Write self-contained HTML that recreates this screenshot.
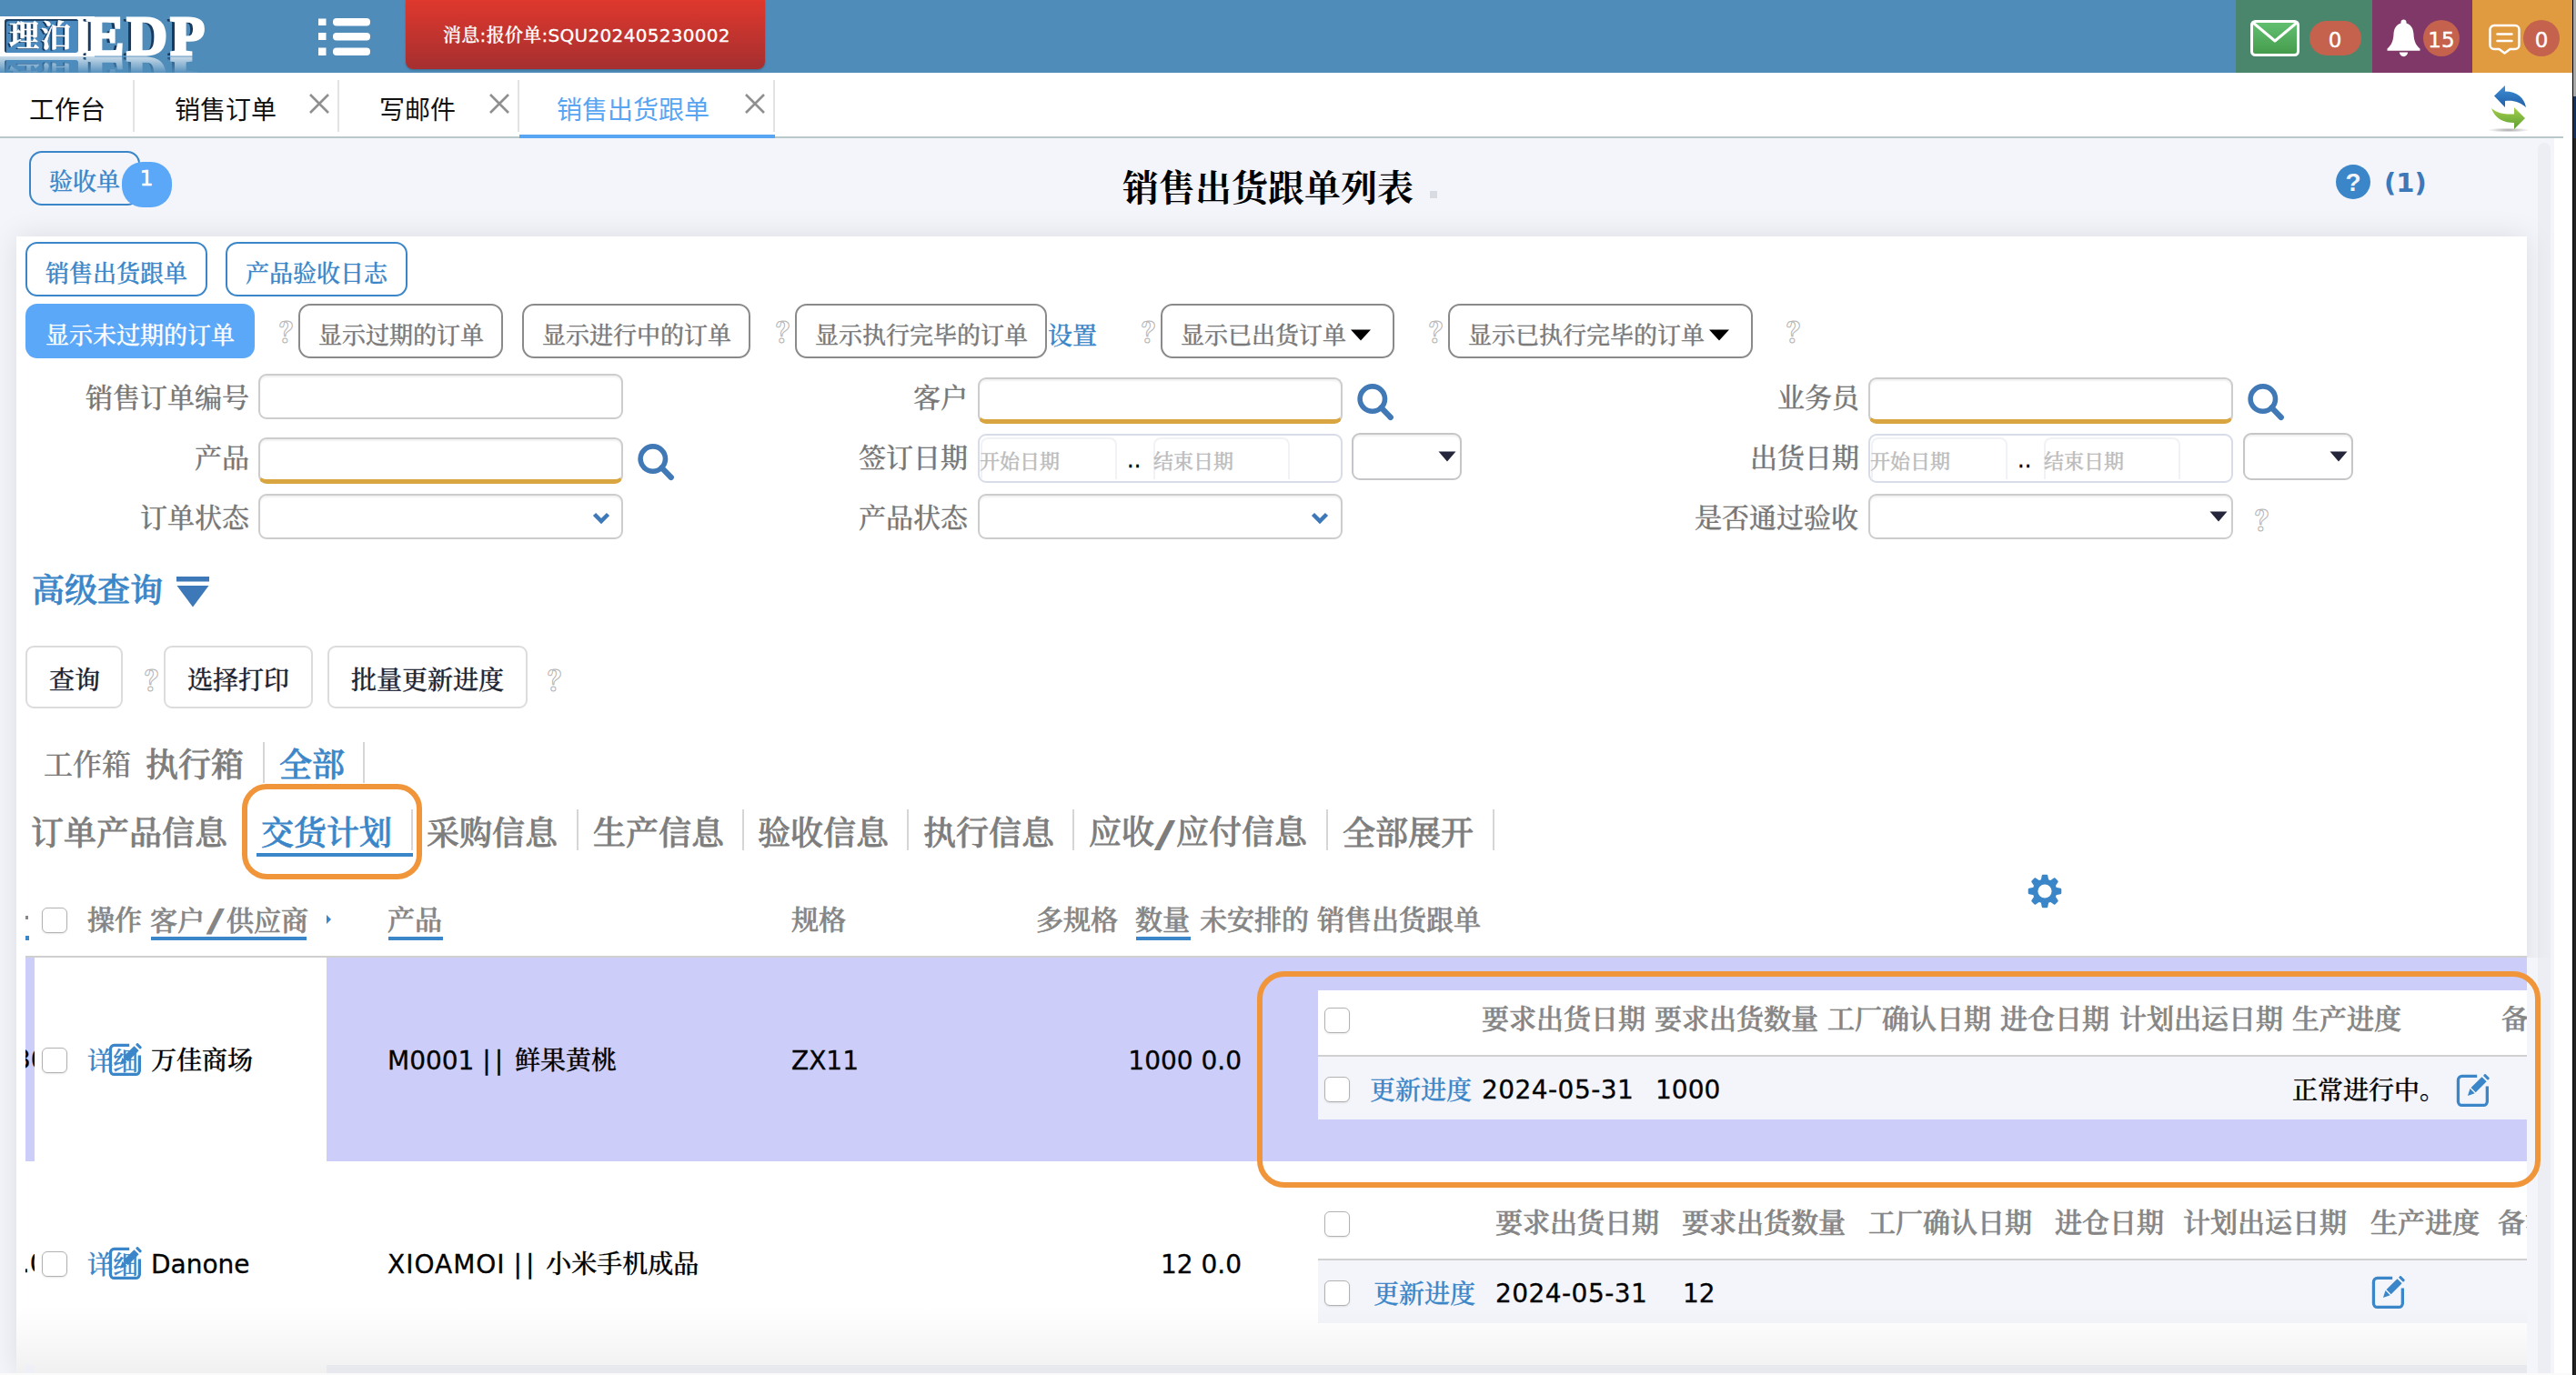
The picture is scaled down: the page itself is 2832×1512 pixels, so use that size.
<!DOCTYPE html>
<html lang="zh-CN">
<head>
<meta charset="utf-8">
<title>销售出货跟单列表</title>
<style>
*{box-sizing:border-box;margin:0;padding:0}
html,body{width:2832px;height:1512px;overflow:hidden;background:#fff}
body{position:relative;font-family:"Liberation Serif","Noto Serif CJK SC",serif;color:#000;font-weight:500;-webkit-text-stroke:.3px currentColor}
.a{position:absolute}
.t{position:absolute;white-space:nowrap;line-height:1;transform:translateY(-50%)}
.sans{font-family:"Liberation Sans","Noto Sans CJK SC",sans-serif;font-weight:400;-webkit-text-stroke:0}
.vd{font-family:"DejaVu Sans","Noto Serif CJK SC",sans-serif}
.serif{font-family:"Liberation Serif","Noto Serif CJK SC",serif}
.b{font-weight:bold;-webkit-text-stroke:0}
.fb{font-weight:500;-webkit-text-stroke:.8px currentColor}
.blue{color:#3a86c8}
.grey{color:#7a7a7a}
.q{position:absolute;white-space:nowrap;line-height:1;transform:translateY(-50%);color:rgba(255,255,255,.6);-webkit-text-stroke:1px #b4b4b4;font-size:30px;font-family:"Noto Serif CJK SC","Liberation Serif",serif;font-weight:900}
/* header */
#hdr{left:0;top:0;width:2828px;height:80px;background:#4f8cba}
#msg{left:446px;top:0;width:395px;height:76px;border-radius:0 0 8px 8px;background:linear-gradient(#df382d,#a52f30);box-shadow:0 1px 2px rgba(0,0,0,.25)}
/* tabs */
#tabs{left:0;top:80px;width:2828px;height:71px;background:#fff}
.tsep{position:absolute;top:88px;width:2px;height:57px;background:#e3e3e3}
.tx{position:absolute;width:24px;height:24px}
.tab{font-size:28px;color:#111}
/* content */
#content{left:0;top:152px;width:2808px;height:1360px;background:#f4f5fa}
#card{left:18px;top:260px;width:2760px;height:1252px;background:#fff;box-shadow:0 0 30px rgba(0,0,20,.10)}
.btn{position:absolute;border:2px solid #3a86c8;border-radius:13px;background:#fff}
.gbtn{position:absolute;border:2px solid #8a8a8a;border-radius:13px;background:#fff}
.wbtn{position:absolute;border:2px solid #dcdcdc;border-radius:9px;background:#fff}
.inp{position:absolute;border:2px solid #cdcdcd;border-radius:9px;background:#fff;box-shadow:inset 0 2px 2px rgba(0,0,0,.06)}
.gold{border-bottom:5px solid #d9a540}
.dr{position:absolute;border:2px solid #d8dce8;border-radius:9px;background:#fff}
.lbl{font-size:30px;color:#777}
.ph{font-size:22px;color:#bcbcbc}
.cb{position:absolute;width:28px;height:28px;border:1.5px solid #b2b2b2;border-radius:6px;background:#fff;box-shadow:0 1px 2px rgba(0,0,0,.1)}
.th{font-size:30px;font-weight:500;-webkit-text-stroke:.7px currentColor;color:#858585}
.td{font-size:28px;color:#000}
.ul{position:absolute;height:4px;background:#3a86c8}
.sl{display:inline-block;width:24px;text-align:center;font-family:"DejaVu Sans",sans-serif;font-style:oblique;font-weight:bold;font-size:32px;line-height:1;-webkit-text-stroke:2px currentColor}
.vs{position:absolute;width:2px;background:#d6d6d6}
</style>
</head>
<body>
<!-- HEADER -->
<div class="a" id="hdr"></div>
<!-- logo -->
<div class="a" style="left:0;top:0;width:244px;height:80px;overflow:hidden">
<div class="a" style="left:0;top:18px;width:240px;height:44px;-webkit-box-reflect:below 0px">
 <div class="a" style="left:0;top:0;width:104px;height:44px;background:#fff"></div>
 <div class="a" style="left:5px;top:3px;width:81px;height:37px;background:#4a8abf;border-radius:3px;box-shadow:inset 2px 2px 0 #1d4266"></div>
 <div class="t serif" id="lg1" style="left:10px;top:22px;font-size:33px;color:#fff;font-weight:700;letter-spacing:2px;-webkit-text-stroke:.5px #fff;text-shadow:-2.200px 1px 0 #173a5e,-1.500px 1px 0 #173a5e">理泊</div>
 <div class="t b" id="lg2" style="left:95px;top:21px;font-size:62px;color:#fff;font-family:'Liberation Serif',serif;-webkit-text-stroke:3px #fff;letter-spacing:3px;text-shadow:-4.500px 1px 0 #173a5e,-3.500px 1px 0 #173a5e,-2.500px 1px 0 #173a5e">EDP</div>
</div>
<div class="a" style="left:0;top:62px;width:244px;height:18px;background:linear-gradient(rgba(79,140,186,.3),rgba(79,140,186,.95))"></div>
</div>
<!-- menu icon -->
<svg class="a" style="left:346px;top:16px;filter:blur(.6px)" width="66" height="50" viewBox="0 0 66 50">
 <g fill="#fff"><rect x="4" y="4.5" width="8.5" height="7.5"/><rect x="4" y="20" width="8.5" height="8"/><rect x="4" y="36.5" width="8.5" height="8.5"/>
 <rect x="20" y="4" width="41" height="8.5" rx="4"/><rect x="20" y="20" width="41" height="8.5" rx="4"/><rect x="20" y="36.5" width="41" height="8.5" rx="4"/></g></svg>
<div class="a" id="msg"></div>
<div class="t vd" style="left:487px;top:39px;font-size:20px;color:#fff;letter-spacing:.3px">消息:报价单:SQU202405230002</div>
<!-- right blocks -->
<div class="a" style="left:2458px;top:0;width:150px;height:80px;background:#4a866b"></div>
<div class="a" style="left:2608px;top:0;width:110px;height:80px;background:#7f3868"></div>
<div class="a" style="left:2718px;top:0;width:110px;height:80px;background:#e09b40"></div>
<svg class="a" style="left:2472px;top:20px" width="58" height="44" viewBox="0 0 58 44">
 <defs><linearGradient id="eg" x1="0" y1="0" x2="0" y2="1"><stop offset="0" stop-color="#63c172"/><stop offset="1" stop-color="#459a4b"/></linearGradient></defs>
 <rect x="3.5" y="3.5" width="51" height="37" rx="4" fill="url(#eg)" stroke="#fff" stroke-width="3"/>
 <path d="M5 5 L29 25 L53 5" fill="none" stroke="#fff" stroke-width="3" stroke-linejoin="round"/></svg>
<div class="a" style="left:2539px;top:23px;width:57px;height:38px;border-radius:19px;background:#c4624e;filter:blur(.5px)"></div>
<div class="t vd" style="left:2567px;top:44px;font-size:23px;color:#fff;transform:translate(-50%,-50%);-webkit-text-stroke:.4px #fff">0</div>
<svg class="a" style="left:2622px;top:20px" width="42" height="44" viewBox="0 0 42 44">
 <path fill="#fff" d="M20.500 1.500c-1.800 0-3 1.200-3 2.800v1.200C12.200 7 9.800 11.800 9.500 17.500 9.100 25 7.300 29.500 2.500 33.500v2.300h36v-2.300c-4.800-4-6.600-8.500-7-16C31.200 11.800 28.800 7 23.500 5.500V4.300c0-1.600-1.200-2.800-3-2.800zM15.800 37.600c.3 2.700 2.200 4.600 4.700 4.600s4.400-1.900 4.700-4.600z"/></svg>
<div class="a" style="left:2664px;top:22px;width:40px;height:40px;border-radius:20px;background:#c4624e;filter:blur(.5px)"></div>
<div class="t vd" style="left:2684px;top:44px;font-size:23px;color:#fff;transform:translate(-50%,-50%);-webkit-text-stroke:.4px #fff">15</div>
<svg class="a" style="left:2734px;top:24px" width="40" height="40" viewBox="0 0 40 40">
 <path d="M8 4h23a4.500 4.500 0 0 1 4.500 4.500v17a4.500 4.500 0 0 1-4.500 4.500h-5.500l-6 4.500-6-4.500H8a4.500 4.500 0 0 1-4.500-4.500v-17A4.500 4.500 0 0 1 8 4z" fill="none" stroke="#fff" stroke-width="2.500" stroke-linejoin="round"/>
 <path d="M11.500 13.500h16M11.500 21h16" stroke="#fff" stroke-width="2.500" stroke-linecap="round"/></svg>
<div class="a" style="left:2774px;top:22px;width:40px;height:40px;border-radius:20px;background:#c4624e;filter:blur(.5px)"></div>
<div class="t vd" style="left:2794px;top:44px;font-size:23px;color:#fff;transform:translate(-50%,-50%);-webkit-text-stroke:.4px #fff">0</div>
<!-- TABS -->
<div class="a" id="tabs"></div>
<!-- tab items -->
<div class="a" style="left:0;top:150px;width:2818px;height:2px;background:#b9c8ca"></div>
<div class="t sans tab" style="left:32px;top:122px">工作台</div>
<div class="tsep" style="left:146px"></div>
<div class="t sans tab" style="left:192px;top:122px">销售订单</div>
<svg class="tx" style="left:339px;top:102px" viewBox="0 0 24 24"><path d="M2 2L22 22M22 2L2 22" stroke="#8f8f8f" stroke-width="2.600" fill="none"/></svg>
<div class="tsep" style="left:371px"></div>
<div class="t sans tab" style="left:417px;top:122px">写邮件</div>
<svg class="tx" style="left:537px;top:102px" viewBox="0 0 24 24"><path d="M2 2L22 22M22 2L2 22" stroke="#8f8f8f" stroke-width="2.600" fill="none"/></svg>
<div class="tsep" style="left:569px"></div>
<div class="t sans tab" style="left:612px;top:122px;color:#57a5f3">销售出货跟单</div>
<svg class="tx" style="left:818px;top:102px" viewBox="0 0 24 24"><path d="M2 2L22 22M22 2L2 22" stroke="#8f8f8f" stroke-width="2.600" fill="none"/></svg>
<div class="tsep" style="left:850px"></div>
<div class="a" style="left:571px;top:148px;width:281px;height:4px;background:#57a5f3"></div>
<!-- refresh icon -->
<svg class="a" style="left:2732px;top:90px" width="56" height="60" viewBox="0 0 56 60">
 <defs><linearGradient id="rb" x1="0" y1="0" x2="0" y2="1"><stop offset="0" stop-color="#3f8fd6"/><stop offset="1" stop-color="#1f5fa8"/></linearGradient>
 <linearGradient id="rg" x1="0" y1="0" x2="0" y2="1"><stop offset="0" stop-color="#a6cf4c"/><stop offset="1" stop-color="#5a9e32"/></linearGradient>
 <radialGradient id="rs"><stop offset="0" stop-color="#000" stop-opacity=".35"/><stop offset="1" stop-color="#000" stop-opacity="0"/></radialGradient></defs>
 <ellipse cx="26" cy="53" rx="23" ry="2.500" fill="url(#rs)"/>
 <path d="M22 4 L10 15.500 L22 28 L22 21 C31 20 38 22 45 28 C43 17 35 10.500 22 10.500 Z" fill="url(#rb)"/>
 <path d="M32 28 L44 40 L32 52 L32 45 C21 45 11 41 7 29 C14 35 22 36 32 35.500 Z" fill="url(#rg)"/></svg>
<!-- CONTENT -->
<div class="a" id="content"></div>
<!-- top row -->
<div class="btn" style="left:32px;top:166px;width:122px;height:60px;border-radius:14px;background:#f4f5fa"></div>
<div class="t blue" style="left:54px;top:201px;font-size:26px;-webkit-text-stroke:.3px currentColor">验收单</div>
<div class="a" style="left:134px;top:178px;width:55px;height:50px;border-radius:23px;background:#5ba8f8"></div>
<div class="t vd" style="left:161px;top:196px;font-size:23px;color:#fff;transform:translate(-50%,-50%);-webkit-text-stroke:.6px #fff">1</div>
<div class="t b" style="left:1234px;top:208px;font-size:40px;color:#000">销售出货跟单列表</div>
<div class="a" style="left:1572px;top:210px;width:8px;height:8px;background:#d9dbe2"></div>
<div class="a" style="left:2568px;top:181px;width:38px;height:38px;border-radius:19px;background:#3a86c8"></div>
<div class="t vd b" style="left:2587px;top:201px;font-size:28px;color:#f4f5fa;transform:translate(-50%,-50%);font-family:'Liberation Sans',sans-serif">?</div>
<div class="t vd b" style="left:2621px;top:201px;font-size:29px;color:#3d78b8">(1)</div>
<div class="a" style="left:2790px;top:157px;width:14px;height:1360px;border-radius:7px;background:#eceef3"></div>
<div class="a" id="card"></div>
<!-- card content -->
<div class="btn" style="left:28px;top:266px;width:200px;height:60px"></div><div class="t blue" style="left:50px;top:301.5px;font-size:26px">销售出货跟单</div>
<div class="btn" style="left:248px;top:266px;width:200px;height:60px"></div><div class="t blue" style="left:270px;top:301.5px;font-size:26px">产品验收日志</div>
<div class="a" style="left:28px;top:334px;width:252px;height:60px;border-radius:13px;background:#5ba8f8"></div><div class="t" style="left:50px;top:370px;font-size:26px;color:#fff">显示未过期的订单</div>
<div class="q" style="left:307.2px;top:363px">？</div>
<div class="gbtn" style="left:328px;top:334px;width:225px;height:60px"></div><div class="t grey" style="left:350px;top:370px;font-size:26px">显示过期的订单</div>
<div class="gbtn" style="left:574px;top:334px;width:251px;height:60px"></div><div class="t grey" style="left:596px;top:370px;font-size:26px">显示进行中的订单</div>
<div class="q" style="left:853.2px;top:363px">？</div>
<div class="gbtn" style="left:874px;top:334px;width:277px;height:60px"></div><div class="t grey" style="left:896px;top:370px;font-size:26px">显示执行完毕的订单</div>
<div class="t blue" style="left:1152px;top:370px;font-size:27px">设置</div>
<div class="q" style="left:1255.2px;top:363px">？</div>
<div class="gbtn" style="left:1276px;top:334px;width:257px;height:60px"></div><div class="t grey" style="left:1298px;top:370px;font-size:26px">显示已出货订单</div>
<svg class="a" style="left:1485px;top:362px" width="22" height="13" viewBox="0 0 22 13"><path d="M0 0.500H22L11 12.500Z" fill="#000"/></svg>
<div class="q" style="left:1571.2px;top:363px">？</div>
<div class="gbtn" style="left:1592px;top:334px;width:335px;height:60px"></div><div class="t grey" style="left:1614px;top:370px;font-size:26px">显示已执行完毕的订单</div>
<svg class="a" style="left:1879px;top:362px" width="22" height="13" viewBox="0 0 22 13"><path d="M0 0.500H22L11 12.500Z" fill="#000"/></svg>
<div class="q" style="left:1964.2px;top:363px">？</div>
<div class="t lbl" style="left:94px;top:438px">销售订单编号</div><div class="inp" style="left:284px;top:411px;width:401px;height:50px"></div>
<div class="t lbl" style="left:1004px;top:438px">客户</div><div class="inp gold" style="left:1075px;top:415px;width:401px;height:51px"></div><svg class="a" style="left:1492px;top:421px" width="44" height="44" viewBox="0 0 44 44"><circle cx="16.800" cy="17.600" r="13.700" fill="none" stroke="#4079b6" stroke-width="5.600"/><path d="M26.500 27.300L36.800 38" stroke="#4079b6" stroke-width="6.200" stroke-linecap="round"/></svg>
<div class="t lbl" style="left:1954px;top:438px">业务员</div><div class="inp gold" style="left:2054px;top:415px;width:401px;height:51px"></div><svg class="a" style="left:2471px;top:421px" width="44" height="44" viewBox="0 0 44 44"><circle cx="16.800" cy="17.600" r="13.700" fill="none" stroke="#4079b6" stroke-width="5.600"/><path d="M26.500 27.300L36.800 38" stroke="#4079b6" stroke-width="6.200" stroke-linecap="round"/></svg>
<div class="t lbl" style="left:214px;top:504px">产品</div><div class="inp gold" style="left:284px;top:481px;width:401px;height:51px"></div><svg class="a" style="left:701px;top:487px" width="44" height="44" viewBox="0 0 44 44"><circle cx="16.800" cy="17.600" r="13.700" fill="none" stroke="#4079b6" stroke-width="5.600"/><path d="M26.500 27.300L36.800 38" stroke="#4079b6" stroke-width="6.200" stroke-linecap="round"/></svg>
<div class="t lbl" style="left:944px;top:504px">签订日期</div><div class="dr" style="left:1075px;top:477px;width:401px;height:54px"></div>
<div class="a" style="left:1078px;top:481px;width:150px;height:46px;border:2px solid #f1f2f6;border-bottom:none;border-radius:8px 8px 0 0"></div>
<div class="a" style="left:1268px;top:481px;width:150px;height:46px;border:2px solid #f1f2f6;border-bottom:none;border-radius:8px 8px 0 0"></div>
<div class="t ph" style="left:1077px;top:508px">开始日期</div>
<div class="t vd" style="left:1239px;top:506px;font-size:24px;color:#000">..</div>
<div class="t ph" style="left:1268px;top:508px">结束日期</div>
<div class="dr" style="left:1486px;top:476px;width:121px;height:52px;border-color:#c6c6c8;box-shadow:inset 0 2px 2px rgba(0,0,0,.06)"></div>
<svg class="a" style="left:1581px;top:496px" width="20" height="12" viewBox="0 0 20 12"><path d="M0.500 0.500H19.500L10 11.500Z" fill="#25253c"/></svg>
<div class="t lbl" style="left:1924px;top:504px">出货日期</div><div class="dr" style="left:2054px;top:477px;width:401px;height:54px"></div>
<div class="a" style="left:2057px;top:481px;width:150px;height:46px;border:2px solid #f1f2f6;border-bottom:none;border-radius:8px 8px 0 0"></div>
<div class="a" style="left:2247px;top:481px;width:150px;height:46px;border:2px solid #f1f2f6;border-bottom:none;border-radius:8px 8px 0 0"></div>
<div class="t ph" style="left:2056px;top:508px">开始日期</div>
<div class="t vd" style="left:2218px;top:506px;font-size:24px;color:#000">..</div>
<div class="t ph" style="left:2247px;top:508px">结束日期</div>
<div class="dr" style="left:2466px;top:476px;width:121px;height:52px;border-color:#c6c6c8;box-shadow:inset 0 2px 2px rgba(0,0,0,.06)"></div>
<svg class="a" style="left:2561px;top:496px" width="20" height="12" viewBox="0 0 20 12"><path d="M0.500 0.500H19.500L10 11.500Z" fill="#25253c"/></svg>
<div class="t lbl" style="left:154px;top:570px">订单状态</div><div class="inp" style="left:284px;top:543px;width:401px;height:50px"></div><svg class="a" style="left:651px;top:563px" width="20" height="14" viewBox="0 0 20 14"><path d="M2.500 2.500L10 10L17.500 2.500" fill="none" stroke="#3d78b8" stroke-width="4.500"/></svg>
<div class="t lbl" style="left:944px;top:570px">产品状态</div><div class="inp" style="left:1075px;top:543px;width:401px;height:50px"></div><svg class="a" style="left:1441px;top:563px" width="20" height="14" viewBox="0 0 20 14"><path d="M2.500 2.500L10 10L17.500 2.500" fill="none" stroke="#3d78b8" stroke-width="4.500"/></svg>
<div class="t lbl" style="left:1863px;top:570px">是否通过验收</div><div class="inp" style="left:2054px;top:543px;width:401px;height:50px"></div><svg class="a" style="left:2429px;top:562px" width="20" height="12" viewBox="0 0 20 12"><path d="M0.500 0.500H19.500L10 11.500Z" fill="#25253c"/></svg>
<div class="q" style="left:2479.2px;top:570px">？</div>
<div class="t fb blue" style="left:35px;top:650px;font-size:36px">高级查询</div>
<svg class="a" style="left:194px;top:634px" width="36" height="34" viewBox="0 0 36 34"><rect x="0" y="0" width="36" height="5.500" fill="#3d78b8"/><path d="M0.500 10H35.500L18 33.500Z" fill="#3d78b8"/></svg>
<div class="wbtn" style="left:28px;top:710px;width:107px;height:69px"></div><div class="t" style="left:54px;top:749px;font-size:28px;color:#1b2433">查询</div>
<div class="q" style="left:159.2px;top:746px">？</div>
<div class="wbtn" style="left:180px;top:710px;width:164px;height:69px"></div><div class="t" style="left:206px;top:749px;font-size:28px;color:#1b2433">选择打印</div>
<div class="wbtn" style="left:360px;top:710px;width:220px;height:69px"></div><div class="t" style="left:386px;top:749px;font-size:28px;color:#1b2433">批量更新进度</div>
<div class="q" style="left:602.2px;top:746px">？</div>
<div class="t grey" style="left:48px;top:841px;font-size:32px">工作箱</div>
<div class="t fb" style="left:160px;top:842px;font-size:36px;color:#7d7d7d">执行箱</div>
<div class="vs" style="left:289px;top:816px;height:45px"></div>
<div class="t fb blue" style="left:307px;top:842px;font-size:36px">全部</div>
<div class="vs" style="left:399px;top:816px;height:45px"></div>
<div class="t fb" style="left:34px;top:917px;font-size:36px;color:#7d7d7d">订单产品信息</div>
<div class="t fb blue" style="left:287px;top:917px;font-size:36px">交货计划</div>
<div class="ul" style="left:282px;top:938px;width:172px;height:4px"></div>
<div class="vs" style="left:452px;top:890px;height:45px"></div>
<div class="t fb" style="left:469px;top:917px;font-size:36px;color:#7d7d7d">采购信息</div><div class="vs" style="left:634px;top:890px;height:45px"></div>
<div class="t fb" style="left:652px;top:917px;font-size:36px;color:#7d7d7d">生产信息</div><div class="vs" style="left:816px;top:890px;height:45px"></div>
<div class="t fb" style="left:833px;top:917px;font-size:36px;color:#7d7d7d">验收信息</div><div class="vs" style="left:997px;top:890px;height:45px"></div>
<div class="t fb" style="left:1015px;top:917px;font-size:36px;color:#7d7d7d">执行信息</div><div class="vs" style="left:1179px;top:890px;height:45px"></div>
<div class="t fb" style="left:1197px;top:917px;font-size:36px;color:#7d7d7d">应收<span class="sl" style="font-size:38px;vertical-align:-2px">/</span>应付信息</div><div class="vs" style="left:1458px;top:890px;height:45px"></div>
<div class="t fb" style="left:1476px;top:917px;font-size:36px;color:#7d7d7d">全部展开</div><div class="vs" style="left:1641px;top:890px;height:45px"></div>
<div class="a" style="left:266px;top:862px;width:198px;height:105px;border:6px solid #f0953a;border-radius:27px"></div>
<!-- table -->
<div class="a" style="left:28px;top:1029px;width:4px;height:5px;background:#3a86c8"></div><div class="a" style="left:28px;top:1007px;width:3px;height:4px;background:#888"></div>
<div class="cb" style="left:46px;top:998px"></div>
<div class="t th" style="left:96px;top:1012px">操作</div>
<div class="t th" style="left:165px;top:1012px">客户<span class="sl">/</span>供应商</div><div class="ul" style="left:166px;top:1030px;width:171px;height:4px"></div>
<svg class="a" style="left:359px;top:1006px" width="5" height="10" viewBox="0 0 5 10"><path d="M0 0L5 5L0 10Z" fill="#3a86c8"/></svg>
<div class="t th" style="left:426px;top:1012px">产品</div><div class="ul" style="left:427px;top:1030px;width:60px;height:4px"></div>
<div class="t th" style="left:870px;top:1012px">规格</div>
<div class="t th" style="left:1139px;top:1012px">多规格</div>
<div class="t th" style="left:1248px;top:1012px">数量</div><div class="ul" style="left:1249px;top:1030px;width:60px;height:4px"></div>
<div class="t th" style="left:1319px;top:1012px">未安排的</div>
<div class="t th" style="left:1448px;top:1012px">销售出货跟单</div>
<svg class="a" style="left:2228px;top:960px" width="40" height="40" viewBox="0 0 40 40"><path d="M16.96 8.08L17.94 2.92L22.06 2.92L23.04 8.08L26.28 9.42L30.62 6.47L33.53 9.38L30.58 13.72L31.92 16.96L37.08 17.94L37.08 22.06L31.92 23.04L30.58 26.28L33.53 30.62L30.62 33.53L26.28 30.58L23.04 31.92L22.06 37.08L17.94 37.08L16.96 31.92L13.72 30.58L9.38 33.53L6.47 30.62L9.42 26.28L8.08 23.04L2.92 22.06L2.92 17.94L8.08 16.96L9.42 13.72L6.47 9.38L9.38 6.47L13.72 9.42Z" fill="#3a86c8" stroke="#3a86c8" stroke-width="2.400" stroke-linejoin="round"/><circle cx="20" cy="20" r="7.600" fill="#fff"/></svg>
<div class="a" style="left:28px;top:1051px;width:2750px;height:2px;background:#cfcfcf"></div>
<div class="a" style="left:28px;top:1053px;width:10px;height:224px;background:#cccdf9"></div>
<div class="a" style="left:359px;top:1053px;width:2419px;height:224px;background:#cccdf9"></div>
<div class="cb" style="left:46px;top:1152px"></div>
<div class="t blue" style="left:96px;top:1168px;font-size:28px">详细</div>
<svg class="a" style="left:117.3px;top:1144.1px" width="42" height="42" viewBox="0 0 42 42"><path d="M25.200 5.450H8.650a4.200 4.200 0 0 0-4.200 4.200V33.250a4.200 4.200 0 0 0 4.200 4.200H32.150a4.200 4.200 0 0 0 4.200-4.200V16.450" fill="none" stroke="#3a86c8" stroke-width="3.300"/><g transform="translate(14.900 26.900) rotate(-45)" fill="#3a86c8"><path d="M0 0L7.350-3.650V3.650Z"/><rect x="8.800" y="-3.650" width="16.900" height="7.300"/><rect x="27.700" y="-3.650" width="3" height="7.300" rx="1"/></g></svg>
<div class="t td vd" style="left:166px;top:1167px">万佳商场</div>
<div class="t td vd" style="left:426px;top:1167px">M0001 <span style="letter-spacing:4px">||</span> 鲜果黄桃</div>
<div class="t td vd" style="left:870px;top:1167px">ZX11</div>
<div class="t td vd" style="right:1467px;top:1167px">1000 0.0</div>
<div class="cb" style="left:46px;top:1376px"></div>
<div class="t blue" style="left:96px;top:1392px;font-size:28px">详细</div>
<svg class="a" style="left:117.3px;top:1368.0px" width="42" height="42" viewBox="0 0 42 42"><path d="M25.200 5.450H8.650a4.200 4.200 0 0 0-4.200 4.200V33.250a4.200 4.200 0 0 0 4.200 4.200H32.150a4.200 4.200 0 0 0 4.200-4.200V16.450" fill="none" stroke="#3a86c8" stroke-width="3.300"/><g transform="translate(14.900 26.900) rotate(-45)" fill="#3a86c8"><path d="M0 0L7.350-3.650V3.650Z"/><rect x="8.800" y="-3.650" width="16.900" height="7.300"/><rect x="27.700" y="-3.650" width="3" height="7.300" rx="1"/></g></svg>
<div class="t td vd" style="left:166px;top:1391px">Danone</div>
<div class="t td vd" style="left:426px;top:1391px"><span style="letter-spacing:1px">XIOAMOI</span> <span style="letter-spacing:4px">||</span> 小米手机成品</div>
<div class="t td vd" style="right:1467px;top:1391px">12 0.0</div>
<div class="a" style="left:28px;top:1140px;width:10px;height:50px;overflow:hidden"><div class="t td vd" style="left:-12px;top:26px">30</div></div>
<div class="a" style="left:28px;top:1364px;width:10px;height:50px;overflow:hidden"><div class="t td vd" style="left:-22px;top:26px">1.0</div></div>
<div class="a" style="left:1449px;top:1089px;width:1329px;height:71px;background:#fff"></div>
<div class="a" style="left:1449px;top:1160px;width:1329px;height:2px;background:#d0d0d0"></div>
<div class="a" style="left:1449px;top:1162px;width:1329px;height:69px;background:#f4f5fa"></div>
<div class="cb" style="left:1456px;top:1108px"></div>
<div class="cb" style="left:1456px;top:1184px"></div>
<div class="t th" style="left:1629px;top:1121px">要求出货日期</div>
<div class="t th" style="left:1819px;top:1121px">要求出货数量</div>
<div class="t th" style="left:2009px;top:1121px">工厂确认日期</div>
<div class="t th" style="left:2199px;top:1121px">进仓日期</div>
<div class="t th" style="left:2330px;top:1121px">计划出运日期</div>
<div class="t th" style="left:2520px;top:1121px">生产进度</div>
<div class="t th" style="left:2750px;top:1121px;width:28px;overflow:hidden">备注</div>
<div class="t blue" style="left:1506px;top:1200px;font-size:28px">更新进度</div>
<div class="t td vd" style="left:1629px;top:1199px;letter-spacing:.45px">2024-05-31</div>
<div class="t td vd" style="left:1820px;top:1199px">1000</div>
<div class="t td" style="left:2520px;top:1200px">正常进行中。</div>
<svg class="a" style="left:2698.0px;top:1178.0px" width="42" height="42" viewBox="0 0 42 42"><path d="M25.200 5.450H8.650a4.200 4.200 0 0 0-4.200 4.200V33.250a4.200 4.200 0 0 0 4.200 4.200H32.150a4.200 4.200 0 0 0 4.200-4.200V16.450" fill="none" stroke="#3a86c8" stroke-width="3.300"/><g transform="translate(14.900 26.900) rotate(-45)" fill="#3a86c8"><path d="M0 0L7.350-3.650V3.650Z"/><rect x="8.800" y="-3.650" width="16.900" height="7.300"/><rect x="27.700" y="-3.650" width="3" height="7.300" rx="1"/></g></svg>
<div class="a" style="left:1449px;top:1313px;width:1329px;height:71px;background:#fff"></div>
<div class="a" style="left:1449px;top:1384px;width:1329px;height:2px;background:#d0d0d0"></div>
<div class="a" style="left:1449px;top:1386px;width:1329px;height:69px;background:#f4f5fa"></div>
<div class="cb" style="left:1456px;top:1332px"></div>
<div class="cb" style="left:1456px;top:1408px"></div>
<div class="t th" style="left:1644px;top:1345px">要求出货日期</div>
<div class="t th" style="left:1849px;top:1345px">要求出货数量</div>
<div class="t th" style="left:2054px;top:1345px">工厂确认日期</div>
<div class="t th" style="left:2259px;top:1345px">进仓日期</div>
<div class="t th" style="left:2400px;top:1345px">计划出运日期</div>
<div class="t th" style="left:2606px;top:1345px">生产进度</div>
<div class="t th" style="left:2746px;top:1345px;width:32px;overflow:hidden">备注</div>
<div class="t blue" style="left:1510px;top:1424px;font-size:28px">更新进度</div>
<div class="t td vd" style="left:1644px;top:1423px;letter-spacing:.45px">2024-05-31</div>
<div class="t td vd" style="left:1850px;top:1423px">12</div>
<svg class="a" style="left:2605.2px;top:1400.0px" width="42" height="42" viewBox="0 0 42 42"><path d="M25.200 5.450H8.650a4.200 4.200 0 0 0-4.200 4.200V33.250a4.200 4.200 0 0 0 4.200 4.200H32.150a4.200 4.200 0 0 0 4.200-4.200V16.450" fill="none" stroke="#3a86c8" stroke-width="3.300"/><g transform="translate(14.900 26.900) rotate(-45)" fill="#3a86c8"><path d="M0 0L7.350-3.650V3.650Z"/><rect x="8.800" y="-3.650" width="16.900" height="7.300"/><rect x="27.700" y="-3.650" width="3" height="7.300" rx="1"/></g></svg>
<div class="a" style="left:2778px;top:1053px;width:30px;height:459px;background:#f4f5fa"></div><div class="a" style="left:2790px;top:1053px;width:14px;height:459px;background:#eceef3"></div>
<div class="a" style="left:1382px;top:1068px;width:1411px;height:238px;border:6px solid #f0953a;border-radius:30px"></div>
<div class="a" style="left:18px;top:1436px;width:2760px;height:74px;background:linear-gradient(rgba(0,0,0,0),rgba(0,0,0,.018) 40%,rgba(0,0,0,.06))"></div>
<div class="a" style="left:359px;top:1501px;width:2419px;height:9px;background:#e8e9ee"></div><div class="a" style="left:28px;top:1501px;width:10px;height:9px;background:#eeeff7"></div><div class="a" style="left:0;top:1510px;width:2828px;height:2px;background:#fafafa"></div>
<!-- window edge -->
<div class="a" style="left:2828px;top:0;width:4px;height:1512px;background:#222"></div>
<div class="a" style="left:2828px;top:0;width:1px;height:1512px;background:#000"></div>
<div class="a" style="left:2829px;top:0;width:3px;height:106px;background:#aaa"></div>
<div class="a" style="left:2829px;top:106px;width:3px;height:46px;background:#15305e"></div>
</body>
</html>
